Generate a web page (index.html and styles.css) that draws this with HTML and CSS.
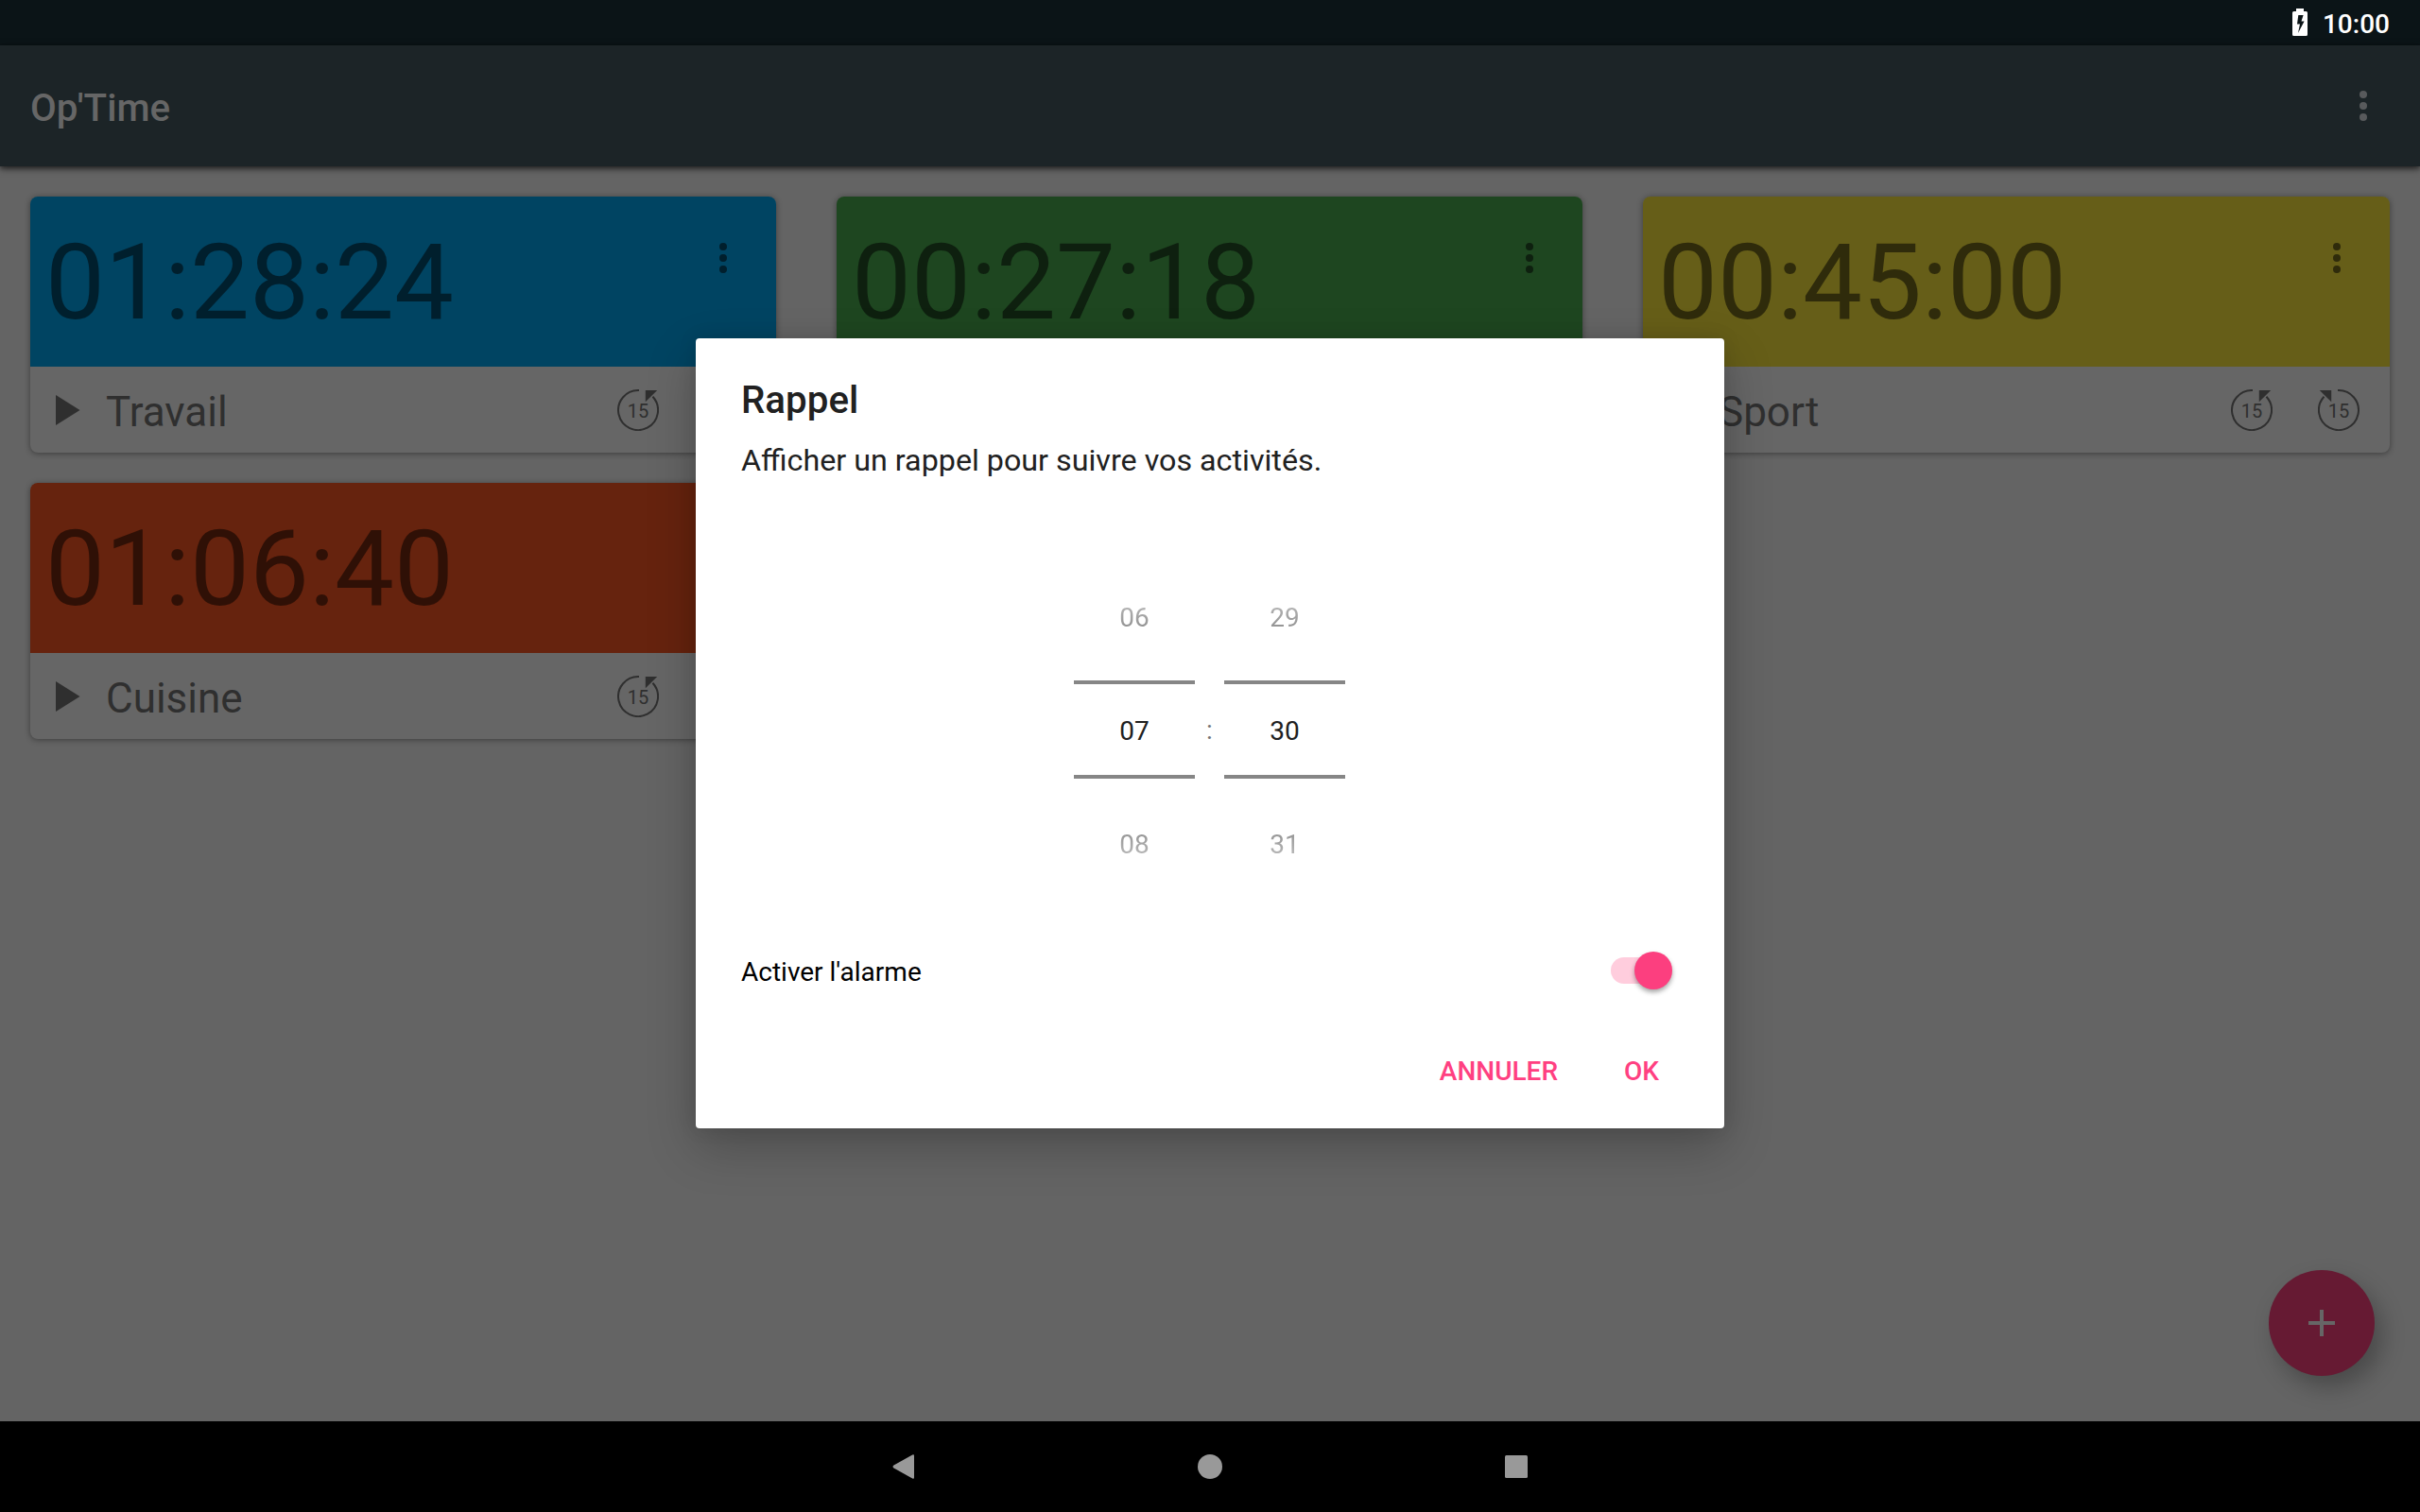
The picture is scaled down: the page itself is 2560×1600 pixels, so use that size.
FILE: index.html
```html
<!DOCTYPE html>
<html lang="fr">
<head>
<meta charset="utf-8">
<title>Op'Time</title>
<link rel="stylesheet" href="styles.css">
</head>
<body>
<svg width="0" height="0" class="defs">
  <symbol id="dots" viewBox="0 0 8 32"><circle cx="4" cy="4" r="4"/><circle cx="4" cy="16" r="4"/><circle cx="4" cy="28" r="4"/></symbol>
  <symbol id="play" viewBox="0 0 26 32"><path d="M0 0v32l25.5-16z"/></symbol>
  <symbol id="turn" viewBox="0 0 44 44"><path d="M23 1.04A21 21 0 1 0 37.5 7.8" fill="none" stroke="currentColor" stroke-width="2"/><path d="M29.8 1h12.4L29.8 13.3z"/></symbol>
</svg>
<div class="screen">
  <header class="status">
    <svg class="battery" viewBox="0 0 16 29"><path fill-rule="evenodd" d="M4 0h8v3h2.5Q16 3 16 4.500V27.500Q16 29 14.500 29H1.500Q0 29 0 27.500V4.500Q0 3 1.500 3H4zM6.300 7L5 16.500H8L6 26L12.600 13.500H9.500L11.600 7z"/></svg>
    <span class="clock">10:00</span>
  </header>
  <div class="appbar"><h1>Op'Time</h1><svg class="dots"><use href="#dots"/></svg></div>
  <main class="grid">
    <section class="card">
      <div class="head blue"><span class="time">01:28:24</span><svg class="dots"><use href="#dots"/></svg></div>
      <div class="foot"><svg class="play"><use href="#play"/></svg><span class="name">Travail</span>
        <span class="skip"><svg><use href="#turn"/></svg><b>15</b></span><span class="skip flip"><svg><use href="#turn"/></svg><b>15</b></span></div>
    </section>
    <section class="card">
      <div class="head green"><span class="time">00:27:18</span><svg class="dots"><use href="#dots"/></svg></div>
      <div class="foot"></div>
    </section>
    <section class="card">
      <div class="head yellow"><span class="time">00:45:00</span><svg class="dots"><use href="#dots"/></svg></div>
      <div class="foot"><svg class="play"><use href="#play"/></svg><span class="name">Sport</span>
        <span class="skip"><svg><use href="#turn"/></svg><b>15</b></span><span class="skip flip"><svg><use href="#turn"/></svg><b>15</b></span></div>
    </section>
    <section class="card">
      <div class="head orange"><span class="time">01:06:40</span></div>
      <div class="foot"><svg class="play"><use href="#play"/></svg><span class="name">Cuisine</span>
        <span class="skip"><svg><use href="#turn"/></svg><b>15</b></span><span class="skip flip"><svg><use href="#turn"/></svg><b>15</b></span></div>
    </section>
  </main>
  <nav class="navbar">
    <svg viewBox="0 0 32 32"><path d="M27 4.500v23Q27 29.500 25.200 28.500L5.500 17.500Q3.500 16 5.500 14.500L25.200 3.500Q27 2.500 27 4.500z"/></svg>
    <svg viewBox="0 0 32 32"><circle cx="16" cy="16" r="13"/></svg>
    <svg viewBox="0 0 32 32"><rect x="4" y="4" width="24" height="24" rx="1.500"/></svg>
  </nav>
  <button class="fab"><svg viewBox="0 0 28 28"><path d="M12 0h4v12h12v4H16v12h-4V16H0v-4h12z"/></svg></button>
  <div class="dialog">
    <h2>Rappel</h2>
    <p class="message">Afficher un rappel pour suivre vos activités.</p>
    <div class="picker">
      <div class="wheel"><span class="prev">06</span><span class="now">07</span><span class="next">08</span></div>
      <span class="colon">:</span>
      <div class="wheel"><span class="prev">29</span><span class="now">30</span><span class="next">31</span></div>
    </div>
    <div class="alarm"><span>Activer l'alarme</span><div class="switch"><i class="thumb"></i></div></div>
    <div class="actions"><button class="cancel">ANNULER</button><button>OK</button></div>
  </div>
</div>
</body>
</html>
```

FILE: styles.css
```css
* { box-sizing: border-box; }
body { margin: 0; font-family: Roboto, sans-serif; background: #646464; }
h1, h2, p { margin: 0; }
button { border: 0; padding: 0; background: none; font: inherit; color: inherit; }
svg { fill: currentColor; display: block; flex: none; }
.defs { display: none; }
.screen { position: relative; width: 2560px; height: 1600px; display: flex; flex-direction: column; overflow: hidden; }

.status { height: 48px; background: #0b1417; color: #fff; display: flex; justify-content: flex-end; gap: 16px; padding: 0 32px 0 0; }
.battery { width: 16px; height: 29px; margin-top: 9px; }
.clock { font-size: 28px; font-weight: 500; line-height: 51px; }

.appbar { height: 128px; background: #1c2427; color: #666; display: flex; justify-content: space-between; align-items: center; padding: 0 56px 0 32px; box-shadow: 0 2px 7px rgba(0, 0, 0, .8); }
.appbar h1 { font-size: 40.300px; font-weight: 500; line-height: 48px; padding-top: 6px; }
.dots { width: 8px; height: 32px; }
.appbar .dots { color: #585a5c; }

.grid { flex: 1; display: grid; grid-template-columns: 789px 789px 790px; grid-auto-rows: 271px; gap: 32px 64px; padding: 32px; align-content: start; }
.card { background: #666; border-radius: 8px; box-shadow: 0 1px 6px rgba(0, 0, 0, .4); color: #2f2f2f; }
.head { height: 180px; border-radius: 8px 8px 0 0; display: flex; justify-content: space-between; padding: 0 52px 0 16px; }
.head .dots { margin-top: 49px; }
.blue { background: #004462; color: #001f2d; }
.green { background: #1e4620; color: #0e200f; }
.yellow { background: #665e18; color: #2f2b0b; }
.orange { background: #66230e; color: #2f1006; }
.time { font-size: 112px; line-height: 181px; }
.foot { height: 91px; display: flex; align-items: center; padding: 0 32px 0 26.500px; }
.play { width: 26px; height: 32px; margin-top: 1px; }
.name { flex: 1; font-size: 44px; line-height: 52px; padding: 4px 0 0 27.500px; }
.skip { position: relative; width: 44px; height: 44px; margin: 1px 0 0 48px; }
.skip svg { width: 44px; height: 44px; }
.flip svg { transform: scaleX(-1); }
.skip b { position: absolute; inset: 0; font-size: 20px; font-weight: 400; line-height: 46px; text-align: center; }

.navbar { height: 96px; background: #000; color: #999; display: flex; justify-content: center; align-items: center; gap: 292px; }
.navbar svg { width: 32px; height: 32px; }

.fab { position: absolute; right: 48px; bottom: 144px; width: 112px; height: 112px; border-radius: 50%; background: #661a33; color: #666; display: grid; place-items: center; box-shadow: 8px 12px 24px rgba(0, 0, 0, .27); }
.fab svg { width: 28px; height: 28px; }

.dialog { position: absolute; left: 736px; top: 358px; width: 1088px; height: 836px; padding: 42px 48px 0; background: #fff; border-radius: 4px; color: #212121; box-shadow: 0 20px 52px rgba(0, 0, 0, .24), 0 0 20px rgba(0, 0, 0, .1); }
.dialog h2 { font-size: 40.300px; font-weight: 500; line-height: 48px; }
.message { margin-top: 19px; font-size: 32.250px; line-height: 40px; }
.picker { margin-top: 85px; display: flex; justify-content: center; align-items: center; font-size: 28px; padding-right: 1px; }
.wheel { width: 128px; display: grid; grid-template-rows: 128px 104px 128px; text-align: center; }
.wheel .prev { line-height: 124px; mask-image: linear-gradient(transparent, rgba(0, 0, 0, .87)); }
.wheel .now { border: solid #868686; border-width: 4px 0; line-height: 100px; }
.wheel .next { line-height: 140px; mask-image: linear-gradient(rgba(0, 0, 0, .87), transparent); }
.colon { width: 31px; text-align: center; color: #757575; }
.alarm { margin-top: 55px; height: 40px; display: flex; justify-content: space-between; align-items: center; padding-right: 7px; font-size: 28px; color: #000; }
.alarm span { padding-top: 2px; }
.switch { width: 65px; height: 40px; display: flex; }
.switch::before { content: ""; flex: 1; height: 28px; margin: 6px -20px 0 0; border-radius: 14px 0 0 14px; background: #ffcddd; }
.thumb { position: relative; width: 40px; height: 40px; border-radius: 50%; background: #fc3f7f; box-shadow: 0 3px 5px rgba(0, 0, 0, .35); }
.actions { margin-top: 50px; height: 72px; display: flex; justify-content: flex-end; gap: 70px; padding-right: 21px; font-size: 28px; font-weight: 500; color: #ff4081; }
.actions button { line-height: 73px; }
```
